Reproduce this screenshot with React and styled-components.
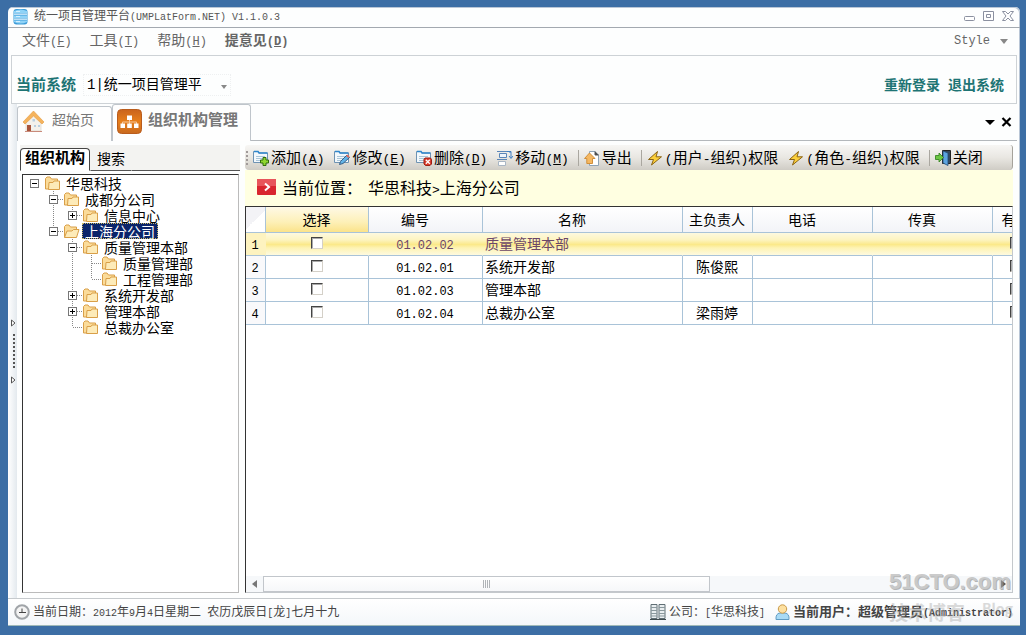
import React, {useState} from "react";
import styled, {createGlobalStyle} from "styled-components";

const GlobalStyle = createGlobalStyle`
* {
    box-sizing: border-box;
}
body {
    margin: 0;
    background: #3c6ea5;
    color: #000;
    font-family: "Noto Sans CJK SC", sans-serif;
    font-size: 14px;
    line-height: 16px;
}
button, select {
    font-family: inherit;
    font-size: inherit;
    line-height: inherit;
    color: inherit;
    background: none;
    border: 0;
    margin: 0;
    padding: 0;
}
`;

const Desktop = styled.div`
height: 100vh;
padding: 7px 6px 9px 8px;
display: flex;
overflow: hidden;
`;

const Window = styled.main`
position: relative;
flex: 1;
min-width: 0;
display: flex;
flex-direction: column;
background: #fdfefe;
border-radius: 5px 5px 0 0;
box-shadow: inset -1px 1px 0 #b9c6d6;
`;

const Mono = styled.span`
font-family: "Liberation Mono", monospace;
font-size: ${({$size}) => $size}px;
line-height: 0;
`;

const TitleBar = styled.header`
height: 21px;
flex: none;
display: flex;
align-items: center;
padding: 0 6px 2px 5px;
border-bottom: 1px solid #a3a9b0;
font-size: 12px;
color: #555;
`;

const TitleText = styled.h1`
flex: 1;
margin: 0 0 0 6px;
padding-bottom: 2px;
font-size: 12px;
font-weight: normal;
`;

const WindowButtons = styled.div`
display: flex;
gap: 7px;
button {
    display: flex;
}
`;

const MenuBar = styled.nav`
height: 27px;
flex: none;
display: flex;
align-items: center;
gap: 18px;
padding: 0 12px 6px 14px;
color: #666;
`;

const MenuItem = styled.button`
white-space: nowrap;
font-weight: ${({$bold}) => $bold ? 'bold' : 'normal'};
`;

const StyleButton = styled.button`
display: flex;
align-items: center;
gap: 10px;
margin-left: auto;
padding-top: 5px;
`;

const SystemBar = styled.section`
height: 49px;
flex: none;
display: flex;
align-items: center;
padding: 11px 12px 0 4px;
margin: 0 3px;
border: 1px solid #cdd2d6;
`;

const SystemLabel = styled.label`
padding-bottom: 2px;
font-size: 15px;
font-weight: bold;
color: #1d7474;
`;

const SelectBox = styled.div`
display: flex;
align-items: center;
width: 148px;
height: 22px;
margin-left: 7px;
border: 1px dotted #eef0f1;
select {
    flex: 1;
    min-width: 0;
    height: 20px;
    padding-left: 3px;
    appearance: none;
    font-family: "Liberation Mono", "Noto Sans CJK SC", monospace;
}
svg {
    margin: 4px 3px 0 0;
}
`;

const SystemLinks = styled.div`
display: flex;
gap: 8px;
margin-left: auto;
padding-bottom: 2px;
a {
    color: #1d7474;
    font-weight: bold;
    text-decoration: none;
}
`;

const Body = styled.div`
flex: 1;
min-height: 0;
display: flex;
`;

const Splitter = styled.div`
width: 9px;
flex: none;
display: flex;
flex-direction: column;
align-items: center;
justify-content: center;
gap: 7px;
padding-left: 2px;
background: linear-gradient(90deg, #fff, #e3e9ee);
`;

const SplitterDots = styled.div`
width: 2px;
height: 35px;
background: repeating-linear-gradient(#555 0 2px, transparent 2px 4px);
`;

const Workspace = styled.div`
flex: 1;
min-width: 0;
display: flex;
flex-direction: column;
`;

const PageTabs = styled.div`
height: 37px;
flex: none;
display: flex;
align-items: stretch;
padding-right: 3px;
`;

const PageTab = styled.button`
display: flex;
align-items: center;
gap: 6px;
width: ${({$active}) => $active ? 139 : 95}px;
margin-top: ${({$active}) => $active ? 0 : 2}px;
padding: 0 4px ${({$active}) => $active ? 4 : 6}px;
border: 1px solid #bfc5cb;
border-bottom: 0;
border-radius: 3px 3px 0 0;
background: #fefefe;
color: #777;
font-size: ${({$active}) => $active ? 15 : 14}px;
font-weight: ${({$active}) => $active ? 'bold' : 'normal'};
white-space: nowrap;
span {
    padding-bottom: 4px;
}
`;

const TabActions = styled.div`
flex: 1;
display: flex;
align-items: center;
justify-content: flex-end;
gap: 6px;
padding-right: 5px;
border-bottom: 1px solid #b4b8bc;
button {
    display: flex;
}
`;

const Panels = styled.div`
flex: 1;
min-height: 0;
display: flex;
gap: 5px;
padding: 4px 7px 5px 3px;
`;

const LeftPanel = styled.aside`
width: 220px;
flex: none;
display: flex;
flex-direction: column;
`;

const LeftTabs = styled.div`
display: flex;
align-items: flex-end;
height: 26px;
flex: none;
background: #f3f3f1;
`;

const LeftTab = styled.button`
height: ${({$active}) => $active ? 23 : 22}px;
padding: 0 ${({$active}) => $active ? 4 : 6}px 6px;
border: 1px solid ${({$active}) => $active ? '#444' : 'transparent'};
border-bottom: 1px solid ${({$active}) => $active ? '#fff' : '#555'};
border-radius: ${({$active}) => $active ? '4px 4px 0 0' : 0};
background: ${({$active}) => $active ? '#fff' : 'none'};
font-size: ${({$active}) => $active ? 15 : 14}px;
font-weight: ${({$active}) => $active ? 'bold' : 'normal'};
`;

const LeftTabsRest = styled.div`
flex: 1;
height: 1px;
background: #555;
`;

const TreeBox = styled.ul`
flex: 1;
min-height: 0;
margin: 3px 1px 0 2px;
padding: 0 0 0 2px;
list-style: none;
overflow: hidden;
background: #fff;
border: 1px solid #bbb;
border-top-color: #333;
border-left-color: #333;
`;

const TreeRow = styled.li`
display: flex;
align-items: center;
height: 16px;
svg {
    display: block;
    flex: none;
}
`;

const TreeLabel = styled.button`
height: 16px;
margin-left: 2px;
padding: 0 3px 3px;
white-space: nowrap;
background: ${({$selected}) => $selected ? '#0a246a' : 'none'};
color: ${({$selected}) => $selected ? '#fff' : '#000'};
outline: ${({$selected}) => $selected ? '1px dotted #c9b866' : 'none'};
outline-offset: -1px;
`;

const RightPanel = styled.section`
flex: 1;
min-width: 0;
display: flex;
flex-direction: column;
`;

const Toolbar = styled.div`
height: 25px;
flex: none;
display: flex;
align-items: center;
overflow: hidden;
border-radius: 3px 3px 4px 4px;
border-right: 1px solid #a5a29b;
background: linear-gradient(#f7f6f4, #e9e7e2 50%, #cfccc5);
`;

const Grip = styled.div`
width: 2px;
height: 14px;
margin-left: 1px;
background: repeating-linear-gradient(#a09a9a 0 2px, transparent 2px 4px);
`;

const ToolButton = styled.button`
display: flex;
align-items: center;
gap: 2px;
padding: 0 5px;
flex: none;
font-size: 15px;
white-space: nowrap;
span {
    padding-bottom: 2px;
}
span span {
    padding: 0;
}
`;

const ToolSeparator = styled.div`
width: 1px;
height: 16px;
margin-left: 4px;
background: #aaa7a0;
`;

const Location = styled.div`
height: 36px;
flex: none;
display: flex;
align-items: center;
gap: 6px;
padding: 0 0 2px 12px;
background: #ffffe1;
font-size: 16px;
`;

const GridBox = styled.div`
flex: 1;
min-height: 0;
display: flex;
flex-direction: column;
border: 1px solid #c4c8cc;
border-top: 1px solid #333;
border-left: 1px solid #333;
background: #fff;
`;

const GridView = styled.div`
flex: 1;
min-height: 0;
overflow: hidden;
`;

const Table = styled.table`
table-layout: fixed;
width: 794px;
border-collapse: separate;
border-spacing: 0;
th, td {
    padding: 0 3px 2px 2px;
    border-right: 1px solid #a9c3d8;
    border-bottom: 1px solid #a9c3d8;
    font-weight: normal;
    text-align: center;
    white-space: nowrap;
}
th {
    height: 26px;
    background: linear-gradient(#fff, #f3f4f8);
}
td {
    height: 23px;
}
input {
    display: block;
    appearance: none;
    width: 12px;
    height: 12px;
    margin: 0 auto;
    background: #fff;
    border: 1px solid #d4d0c8;
    border-top-color: #444;
    border-left-color: #444;
    box-shadow: inset 1px 1px 0 #aaa;
}
`;

const HeadCell = styled.th`
&& {
    background: ${({$active}) => $active ? 'linear-gradient(#fef9e6, #fdf0b8 60%, #fbe38a)' : ''};
    padding-right: ${({$shift}) => $shift ? 23 : 3}px;
}
`;

const CornerCell = styled.th`
&& {
    background: linear-gradient(135deg, #f3f3f6 50%, #fff 50%);
}
`;

const Row = styled.tr`
background: ${({$active}) => $active
    ? 'linear-gradient(#fdf9e0, #fdf4c0 30%, #fbe98a 50%, #fdf3b4 65%, #fefbe6)'
    : '#fff'};
color: ${({$active}) => $active ? '#6b4668' : '#000'};
&& td {
    border-right-color: ${({$active}) => $active ? 'transparent' : '#a9c3d8'};
}
`;

const IndexCell = styled.td`
&& {
    color: #000;
    background: ${({$active}) => $active ? '#fdf3c0' : '#f9f9fb'};
    border-right-color: ${({$active}) => $active ? '#eadb98' : '#a9c3d8'};
}
`;

const NameCell = styled.td`
&& {
    text-align: left;
}
`;

const ScrollBar = styled.div`
height: 16px;
flex: none;
display: flex;
background: #f6f8fa;
`;

const ScrollButton = styled.button`
width: 17px;
display: flex;
align-items: center;
justify-content: center;
`;

const ScrollTrack = styled.div`
flex: 1;
`;

const ScrollThumb = styled.div`
width: 61%;
height: 16px;
display: flex;
align-items: center;
justify-content: center;
background: linear-gradient(#fff, #f6f7f9);
border: 1px solid #c2c6cb;
`;

const ThumbGrip = styled.div`
width: 7px;
height: 8px;
background: repeating-linear-gradient(90deg, #b0b4b8 0 1px, transparent 1px 2px);
`;

const StatusBar = styled.footer`
height: 28px;
flex: none;
display: flex;
align-items: center;
gap: 3px;
padding: 0 7px 1px 6px;
border-top: 1px solid #c6cacd;
border-bottom: 1px solid #9fb9b8;
background: linear-gradient(#fff, #f4f7fa);
font-size: 12px;
color: #444;
white-space: nowrap;
span {
    padding-bottom: 1px;
}
`;

const Company = styled.span`
margin-right: 7px;
`;

const UserName = styled.span`
font-size: 13px;
font-weight: bold;
`;

const Spacer = styled.div`
flex: 1;
`;

const Watermark = styled.div`
position: absolute;
right: 7px;
bottom: 0;
width: 124px;
color: #aaa;
opacity: 0.6;
font-weight: bold;
pointer-events: none;
white-space: nowrap;
`;

const WatermarkSite = styled.div`
font-family: "Liberation Sans", sans-serif;
font-size: 22px;
line-height: 32px;
text-shadow: 1px 1px 0 #888;
`;

const WatermarkBlog = styled.div`
display: flex;
justify-content: space-between;
font-size: 19px;
line-height: 28px;
opacity: 0.7;
span {
    font-size: 14px;
    line-height: 20px;
}
`;

// Latin runs are set in a smaller mono face so they take half of a CJK cell
const Mixed = ({text, size}) => text.split(/([\x20-\x7e]+)/).map((part, i) =>
    i % 2 ? <Mono key={i} $size={size}>{part}</Mono> : part
);

const Hotkey = ({text, letter, size}) => (
    <span>{text}<Mono $size={size}>(<u>{letter}</u>)</Mono></span>
);

const DatabaseIcon = () => (
    <svg width="15" height="17" viewBox="0 0 15 17">
        <rect x="0.5" y="1" width="14" height="15.5" rx="3" fill="#3d9bd8"/>
        <path d="M1 3Q7.500 0 14 3V5H1zM1 7.500H14V10H1zM1 12.500H14V14Q7.500 17 1 14z" fill="#8fd3f7"/>
        <path d="M1 6.200H14M1 11.200H14" stroke="#e8f7ff" strokeWidth="1.200"/>
        <path d="M3 3.500H7M3 8.500H7M3 13.500H7" stroke="#d6f0ff"/>
    </svg>
);

const Triangle = ({w = 8, h = 5, color = '#888'}) => (
    <svg width={w} height={h} viewBox="0 0 8 5" preserveAspectRatio="none"><path d="M0 0H8L4 5z" fill={color}/></svg>
);

const HomeIcon = () => (
    <svg width="24" height="24" viewBox="0 0 24 24">
        <path d="M4 12L12 5L19 12V22H4z" fill="#f4f1ec" stroke="#ddd5ca" strokeWidth="0.700"/>
        <path d="M1 13L11.500 2L22 13L20 15L11.500 7L3 15z" fill="#f5b35d" stroke="#e39a3f" strokeWidth="0.600"/>
        <path d="M5 16H9V22H5z" fill="#a9553c"/>
        <path d="M12 16H14V18H12zM16 16H18V18H16zM10.500 10H13V12.500H10.500z" fill="#b9cfe0"/>
        <path d="M3 22.500H20" stroke="#c98a7a"/>
    </svg>
);

const OrgIcon = () => (
    <svg width="25" height="25" viewBox="0 0 25 25">
        <defs>
            <linearGradient id="org" x1="0" y1="0" x2="0" y2="1">
                <stop offset="0" stopColor="#c9631d"/>
                <stop offset="0.500" stopColor="#e77f1b"/>
                <stop offset="1" stopColor="#c8691f"/>
            </linearGradient>
        </defs>
        <rect x="0.500" y="0.500" width="24" height="24" rx="4" fill="url(#org)" stroke="#b95c1c"/>
        <path d="M12.500 10V16M5.500 16V13H19.500V16" fill="none" stroke="#f5c9a0"/>
        <path d="M10 6.500H15V11H10zM3.500 14.500H8V19H3.500zM10.200 14.500H14.800V19H10.200zM17 14.500H21.500V19H17z" fill="#fff"/>
    </svg>
);

const FolderIcon = ({open}) => (
    <svg width="17" height="15" viewBox="0 0 17 15">
        <path d="M1.500 13V2.500L3 1H6L7.500 3H13.500V13z" fill="#fbdc9a" stroke="#d99f48"/>
        {open
            ? <path d="M4 7H9L10.500 5.500H16L13.500 13.500H1.500z" fill="#fdebb9" stroke="#d99f48"/>
            : <path d="M4.500 13.500L5 6.500H9L10 5H15.500V13.500z" fill="#fdebb9" stroke="#d99f48"/>}
    </svg>
);

const Guide = ({kind}) => (
    <svg width="19" height="16" viewBox="0 0 19 16">
        <g stroke="#888" strokeDasharray="1 1">
            {/[|tTP]/.test(kind) && <path d="M9.500 0V16"/>}
            {/[lLQ]/.test(kind) && <path d="M9.500 0V8"/>}
            {/[tTPlLQ]/.test(kind) && <path d="M10 8.500H19"/>}
        </g>
        {/[TPLQM]/.test(kind) && <rect x="5.500" y="4.500" width="8" height="8" fill="#fff" stroke="#777"/>}
        {/[TPLQM]/.test(kind) && <path d="M7 8.500H12" stroke="#000"/>}
        {/[PQ]/.test(kind) && <path d="M9.500 6V11" stroke="#000"/>}
    </svg>
);

const Sheet = ({children}) => (
    <svg width="16" height="16" viewBox="0 0 16 16">
        <path d="M0.500 12.500V1.500H5L6 3H14.500V12.500z" fill="#f3f8fc" stroke="#6f93b3"/>
        <path d="M1 1.500H5L6 3H14.500" fill="none" stroke="#2f86cc" strokeWidth="1.500"/>
        <path d="M3 6.500H12M3 8.500H10M3 10.500H8" stroke="#a9c5d8"/>
        {children}
    </svg>
);

const toolIcons = {
    add: <Sheet><path d="M10 7.500H13V10H15.500V13H13V15.500H10V13H7.500V10H10z" fill="#8fd62e" stroke="#2f6b0d"/></Sheet>,
    edit: <Sheet><path d="M5.500 14.500L6.500 11.500L13 5L15.500 7.500L9 13.500z" fill="#62b4e8" stroke="#3a5f86"/><path d="M12 6L13.500 4.500L15.500 6.500L14.500 8z" fill="#e26a5a"/></Sheet>,
    remove: <Sheet><path d="M9 8H14.500L15.500 9.500V14L14 15.500H9.500L8 14V9.500z" fill="#d93b2b" stroke="#9c1f14"/><path d="M9.800 9.800L13.800 13.800M13.800 9.800L9.800 13.800" stroke="#fff" strokeWidth="1.300"/></Sheet>,
    move: (
        <svg width="16" height="16" viewBox="0 0 16 16">
            <path d="M0 1.500H10M2.500 3.500H9.500V7.500H2.500zM0 9.500H10" fill="#eef4fb" stroke="#5b86b8"/>
            <path d="M1.500 11.500H8.500V15.500H1.500z" fill="#fff" stroke="#a9b6c4"/>
            <path d="M10 1.500H14V8M12 6L14 8.500L16 6M13 3V1" fill="none" stroke="#3f7fc2"/>
        </svg>
    ),
    output: (
        <svg width="16" height="16" viewBox="0 0 16 16">
            <path d="M5.500 1.500H11L14.500 5V15.500H5.500z" fill="#fff" stroke="#8fa3b5"/>
            <path d="M11 1.500V5H14.500" fill="#444" stroke="#555"/>
            <path d="M5.500 3L11 8.500H8.500V13.500H2.800V8.500H0.500z" fill="#f5b862" stroke="#d18f3a"/>
        </svg>
    ),
    bolt: (
        <svg width="16" height="16" viewBox="0 0 16 16">
            <path d="M10.500 1.500L1.500 9.500H6.500L4.500 15L14.500 6.800H9z" fill="#fbcf3a" stroke="#8c6414"/>
        </svg>
    ),
    door: (
        <svg width="16" height="16" viewBox="0 0 16 16">
            <path d="M7.500 0.500H15.500V13.500H7.500z" fill="#35495e" stroke="#222"/>
            <path d="M8 1L13 3V15.500L8 13z" fill="#5ca4e0" stroke="#234a75" strokeWidth="0.800"/>
            <path d="M0.500 5.500H4V3L8.500 7.500L4 12V9.500H0.500z" fill="#6cc644" stroke="#2d7d1a" strokeWidth="0.800"/>
        </svg>
    )
};

const ArrowBadge = () => (
    <svg width="19" height="16" viewBox="0 0 19 16">
        <rect width="19" height="16" rx="1" fill="#d9262e"/>
        <rect width="19" height="7" fill="#e8555a"/>
        <path d="M8 4.500L12 8L8 11.500" fill="none" stroke="#fff" strokeWidth="2"/>
    </svg>
);

const ClockIcon = () => (
    <svg width="16" height="16" viewBox="0 0 16 16">
        <circle cx="8" cy="8" r="6.800" fill="#f3f3f3" stroke="#a0a4a8" strokeWidth="2"/>
        <path d="M8 4.500V8.500H12M5 8.500H8" fill="none" stroke="#444"/>
    </svg>
);

const BookIcon = () => (
    <svg width="16" height="16" viewBox="0 0 16 16">
        <path d="M1 0.500H7V14.500H1zM9 0.500H15V14.500H9z" fill="#e9eef0" stroke="#5f6e74"/>
        <path d="M1 3.500H7M1 6.500H7M1 9.500H7M1 12H7M9 3.500H15M9 6.500H15M9 9.500H15M9 12H15" stroke="#8a989d"/>
        <path d="M0 15.500H16" stroke="#3f4a4e"/>
    </svg>
);

const UserIcon = () => (
    <svg width="15" height="16" viewBox="0 0 15 16">
        <path d="M1 15.500Q0.500 9.500 5 9H10Q14.500 9.500 14 15.500z" fill="#a8daf5" stroke="#5f9cc4"/>
        <circle cx="7.500" cy="5" r="4.200" fill="#fde0a0" stroke="#c99a4a"/>
    </svg>
);

// guides: | line, t/l branch and last branch, T/P and L/Q the same with a minus or plus box
const tree = [
    {guides: 'M', name: '华思科技'},
    {guides: ' T', name: '成都分公司'},
    {guides: ' |Q', name: '信息中心'},
    {guides: ' L', name: '上海分公司', open: true},
    {guides: '  T', name: '质量管理本部'},
    {guides: '  |t', name: '质量管理部'},
    {guides: '  |l', name: '工程管理部'},
    {guides: '  P', name: '系统开发部'},
    {guides: '  P', name: '管理本部'},
    {guides: '  l', name: '总裁办公室'}
];

const tools = [
    {icon: 'add', text: '添加', letter: 'A'},
    {icon: 'edit', text: '修改', letter: 'E'},
    {icon: 'remove', text: '删除', letter: 'D'},
    {icon: 'move', text: '移动', letter: 'M'},
    {icon: 'output', text: '导出', separated: true},
    {icon: 'bolt', text: '(用户-组织)权限', separated: true},
    {icon: 'bolt', text: '(角色-组织)权限'},
    {icon: 'door', text: '关闭', separated: true}
];

const columns = [
    {name: '选择', width: 103},
    {name: '编号', width: 114, shift: true},
    {name: '名称', width: 200, shift: true},
    {name: '主负责人', width: 70},
    {name: '电话', width: 120, shift: true},
    {name: '传真', width: 120, shift: true},
    {name: '有效', width: 47}
];

const departments = [
    {code: '01.02.02', name: '质量管理本部', manager: ''},
    {code: '01.02.01', name: '系统开发部', manager: '陈俊熙'},
    {code: '01.02.03', name: '管理本部', manager: ''},
    {code: '01.02.04', name: '总裁办公室', manager: '梁雨婷'}
];

const App = () => {
    const [node, setNode] = useState('上海分公司');
    const [activeRow, setActiveRow] = useState(0);

    return (
        <Desktop>
            <GlobalStyle/>
            <Window>
                <TitleBar>
                    <DatabaseIcon/>
                    <TitleText><Mixed text="统一项目管理平台(UMPLatForm.NET) V1.1.0.3" size={10}/></TitleText>
                    <WindowButtons>
                        <button aria-label="最小化">
                            <svg width="12" height="12"><rect x="0.500" y="6.500" width="10" height="4" rx="1" fill="#fff" stroke="#8b90a0"/></svg>
                        </button>
                        <button aria-label="还原">
                            <svg width="12" height="12"><path d="M0.500 1.500H10.500V10.500H0.500zM3.500 4.500H7.500V7.500H3.500z" fill="#fff" stroke="#8b90a0"/></svg>
                        </button>
                        <button aria-label="退出">
                            <svg width="12" height="12"><path d="M0.500 1.500H3.500L6 4L8.500 1.500H11.500L8 6L11.500 10.500H8.500L6 8L3.500 10.500H0.500L4 6z" fill="#fff" stroke="#8b90a0"/></svg>
                        </button>
                    </WindowButtons>
                </TitleBar>
                <MenuBar>
                    <MenuItem><Hotkey text="文件" letter="F" size={12}/></MenuItem>
                    <MenuItem><Hotkey text="工具" letter="T" size={12}/></MenuItem>
                    <MenuItem><Hotkey text="帮助" letter="H" size={12}/></MenuItem>
                    <MenuItem $bold><Hotkey text="提意见" letter="D" size={12}/></MenuItem>
                    <StyleButton><Mono $size={12}>Style</Mono><Triangle/></StyleButton>
                </MenuBar>
                <SystemBar>
                    <SystemLabel htmlFor="system">当前系统</SystemLabel>
                    <SelectBox>
                        <select id="system">
                            <option>1|统一项目管理平</option>
                        </select>
                        <Triangle w={6} h={4}/>
                    </SelectBox>
                    <SystemLinks>
                        <a href="#login">重新登录</a>
                        <a href="#exit">退出系统</a>
                    </SystemLinks>
                </SystemBar>
                <Body>
                    <Splitter>
                        <svg width="5" height="8"><path d="M0.500 1L4 4L0.500 7z" fill="#fff" stroke="#555"/></svg>
                        <SplitterDots/>
                        <svg width="5" height="8"><path d="M0.500 1L4 4L0.500 7z" fill="#fff" stroke="#555"/></svg>
                    </Splitter>
                    <Workspace>
                        <PageTabs>
                            <PageTab><HomeIcon/><span>超始页</span></PageTab>
                            <PageTab $active><OrgIcon/><span>组织机构管理</span></PageTab>
                            <TabActions>
                                <button aria-label="页签列表"><Triangle w={10} h={5} color="#000"/></button>
                                <button aria-label="关闭页签">
                                    <svg width="11" height="10"><path d="M1.500 1L9.500 9M9.500 1L1.500 9" stroke="#000" strokeWidth="2.200"/></svg>
                                </button>
                            </TabActions>
                        </PageTabs>
                        <Panels>
                            <LeftPanel>
                                <LeftTabs>
                                    <LeftTab $active>组织机构</LeftTab>
                                    <LeftTab>搜索</LeftTab>
                                    <LeftTabsRest/>
                                </LeftTabs>
                                <TreeBox>
                                    {tree.map(({guides, name, open}) => (
                                        <TreeRow key={name}>
                                            {guides.split('').map((kind, i) => <Guide key={i} kind={kind}/>)}
                                            <FolderIcon open={open}/>
                                            <TreeLabel $selected={name === node} onClick={() => setNode(name)}>{name}</TreeLabel>
                                        </TreeRow>
                                    ))}
                                </TreeBox>
                            </LeftPanel>
                            <RightPanel>
                                <Toolbar>
                                    <Grip/>
                                    {tools.map(({icon, text, letter, separated}) => (
                                        <React.Fragment key={text}>
                                            {separated && <ToolSeparator/>}
                                            <ToolButton>
                                                {toolIcons[icon]}
                                                {letter
                                                    ? <Hotkey text={text} letter={letter} size={13}/>
                                                    : <span><Mixed text={text} size={13}/></span>}
                                            </ToolButton>
                                        </React.Fragment>
                                    ))}
                                </Toolbar>
                                <Location>
                                    <ArrowBadge/>
                                    <span>当前位置：</span>
                                    <span><Mixed text="华思科技>上海分公司" size={13}/></span>
                                </Location>
                                <GridBox>
                                    <GridView>
                                        <Table>
                                            <colgroup>
                                                <col width="20"/>
                                                {columns.map(({name, width}) => <col key={name} width={width}/>)}
                                            </colgroup>
                                            <thead>
                                                <tr>
                                                    <CornerCell/>
                                                    {columns.map(({name, shift}, i) => (
                                                        <HeadCell key={name} $active={i === 0} $shift={shift}>{name}</HeadCell>
                                                    ))}
                                                </tr>
                                            </thead>
                                            <tbody>
                                                {departments.map(({code, name, manager}, i) => (
                                                    <Row key={code} $active={i === activeRow} onClick={() => setActiveRow(i)}>
                                                        <IndexCell $active={i === activeRow}><Mono $size={12}>{i + 1}</Mono></IndexCell>
                                                        <td><input type="checkbox" aria-label={`选择 ${name}`}/></td>
                                                        <td><Mono $size={12}>{code}</Mono></td>
                                                        <NameCell>{name}</NameCell>
                                                        <td>{manager}</td>
                                                        <td/>
                                                        <td/>
                                                        <td><input type="checkbox" aria-label={`有效 ${name}`}/></td>
                                                    </Row>
                                                ))}
                                            </tbody>
                                        </Table>
                                    </GridView>
                                    <ScrollBar>
                                        <ScrollButton aria-label="向左滚动">
                                            <svg width="5" height="8"><path d="M5 0V8L0 4z" fill="#777"/></svg>
                                        </ScrollButton>
                                        <ScrollTrack><ScrollThumb><ThumbGrip/></ScrollThumb></ScrollTrack>
                                        <ScrollButton aria-label="向右滚动">
                                            <svg width="5" height="8"><path d="M0 0V8L5 4z" fill="#555"/></svg>
                                        </ScrollButton>
                                    </ScrollBar>
                                </GridBox>
                            </RightPanel>
                        </Panels>
                    </Workspace>
                </Body>
                <StatusBar>
                    <ClockIcon/>
                    <span><Mixed text="当前日期：2012年9月4日星期二 农历戊辰日[龙]七月十九" size={10}/></span>
                    <Spacer/>
                    <BookIcon/>
                    <Company><Mixed text="公司：[华思科技]" size={10}/></Company>
                    <UserIcon/>
                    <UserName><Mixed text="当前用户：超级管理员(Administrator)" size={10}/></UserName>
                </StatusBar>
                <Watermark aria-hidden="true">
                    <WatermarkSite>51CTO.com</WatermarkSite>
                    <WatermarkBlog>技术博客<span>Blog</span></WatermarkBlog>
                </Watermark>
            </Window>
        </Desktop>
    );
}

export default App;
